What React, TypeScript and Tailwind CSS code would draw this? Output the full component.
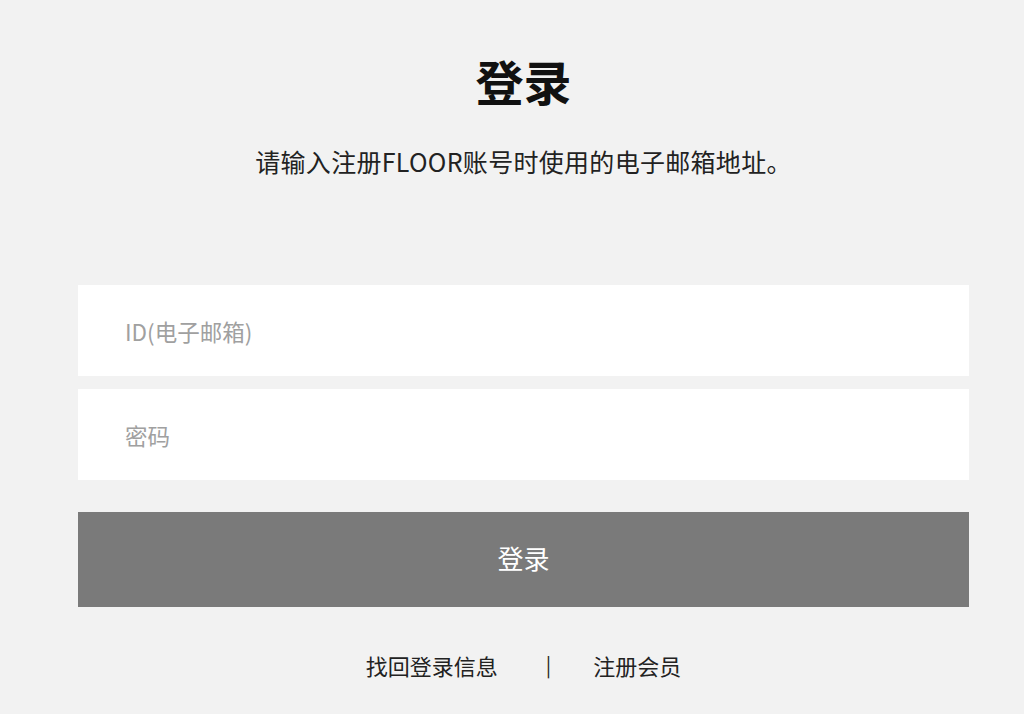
import { useState } from 'react';

const font = { fontFamily: '"Noto Sans CJK SC", "Noto Sans", sans-serif' };

export default function App() {
  const [email, setEmail] = useState('');
  const [password, setPassword] = useState('');

  return (
    <div className="min-h-screen w-full bg-[#f2f2f2] text-[#222]" style={font}>
      <div className="ml-[78px] flex w-[891px] flex-col items-center pt-[52px]">
        {/* Heading */}
        <h1 className="text-[48px] font-bold leading-[56px] text-[#111]">登录</h1>
        <p className="mt-[37px] text-[25px] leading-[32px] tracking-[0.3px] text-[#222]">
          请输入注册FLOOR账号时使用的电子邮箱地址。
        </p>

        {/* Form */}
        <form className="mt-[108px] flex w-full flex-col" onSubmit={(e) => e.preventDefault()}>
          <input
            type="text"
            value={email}
            onChange={(e) => setEmail(e.target.value)}
            placeholder="ID(电子邮箱)"
            className="h-[91px] w-full bg-white pl-[47px] text-[22.5px] text-[#333] outline-none placeholder:text-[#a0a0a0]"
          />
          <input
            type="password"
            value={password}
            onChange={(e) => setPassword(e.target.value)}
            placeholder="密码"
            className="mt-[13px] h-[91px] w-full bg-white pl-[47px] text-[22.5px] text-[#333] outline-none placeholder:text-[#a0a0a0]"
          />
          <button
            type="submit"
            className="mt-[32px] h-[95px] w-full bg-[#7a7a7a] pb-[4px] text-[26px] text-white"
          >
            登录
          </button>
        </form>

        {/* Links */}
        <div className="mt-[43px] flex items-center text-[22px] leading-[30px] text-[#222]">
          <a href="#" className="hover:underline">找回登录信息</a>
          <span className="ml-[48px] mr-[42px] text-[20px]">|</span>
          <a href="#" className="hover:underline">注册会员</a>
        </div>
      </div>
    </div>
  );
}
